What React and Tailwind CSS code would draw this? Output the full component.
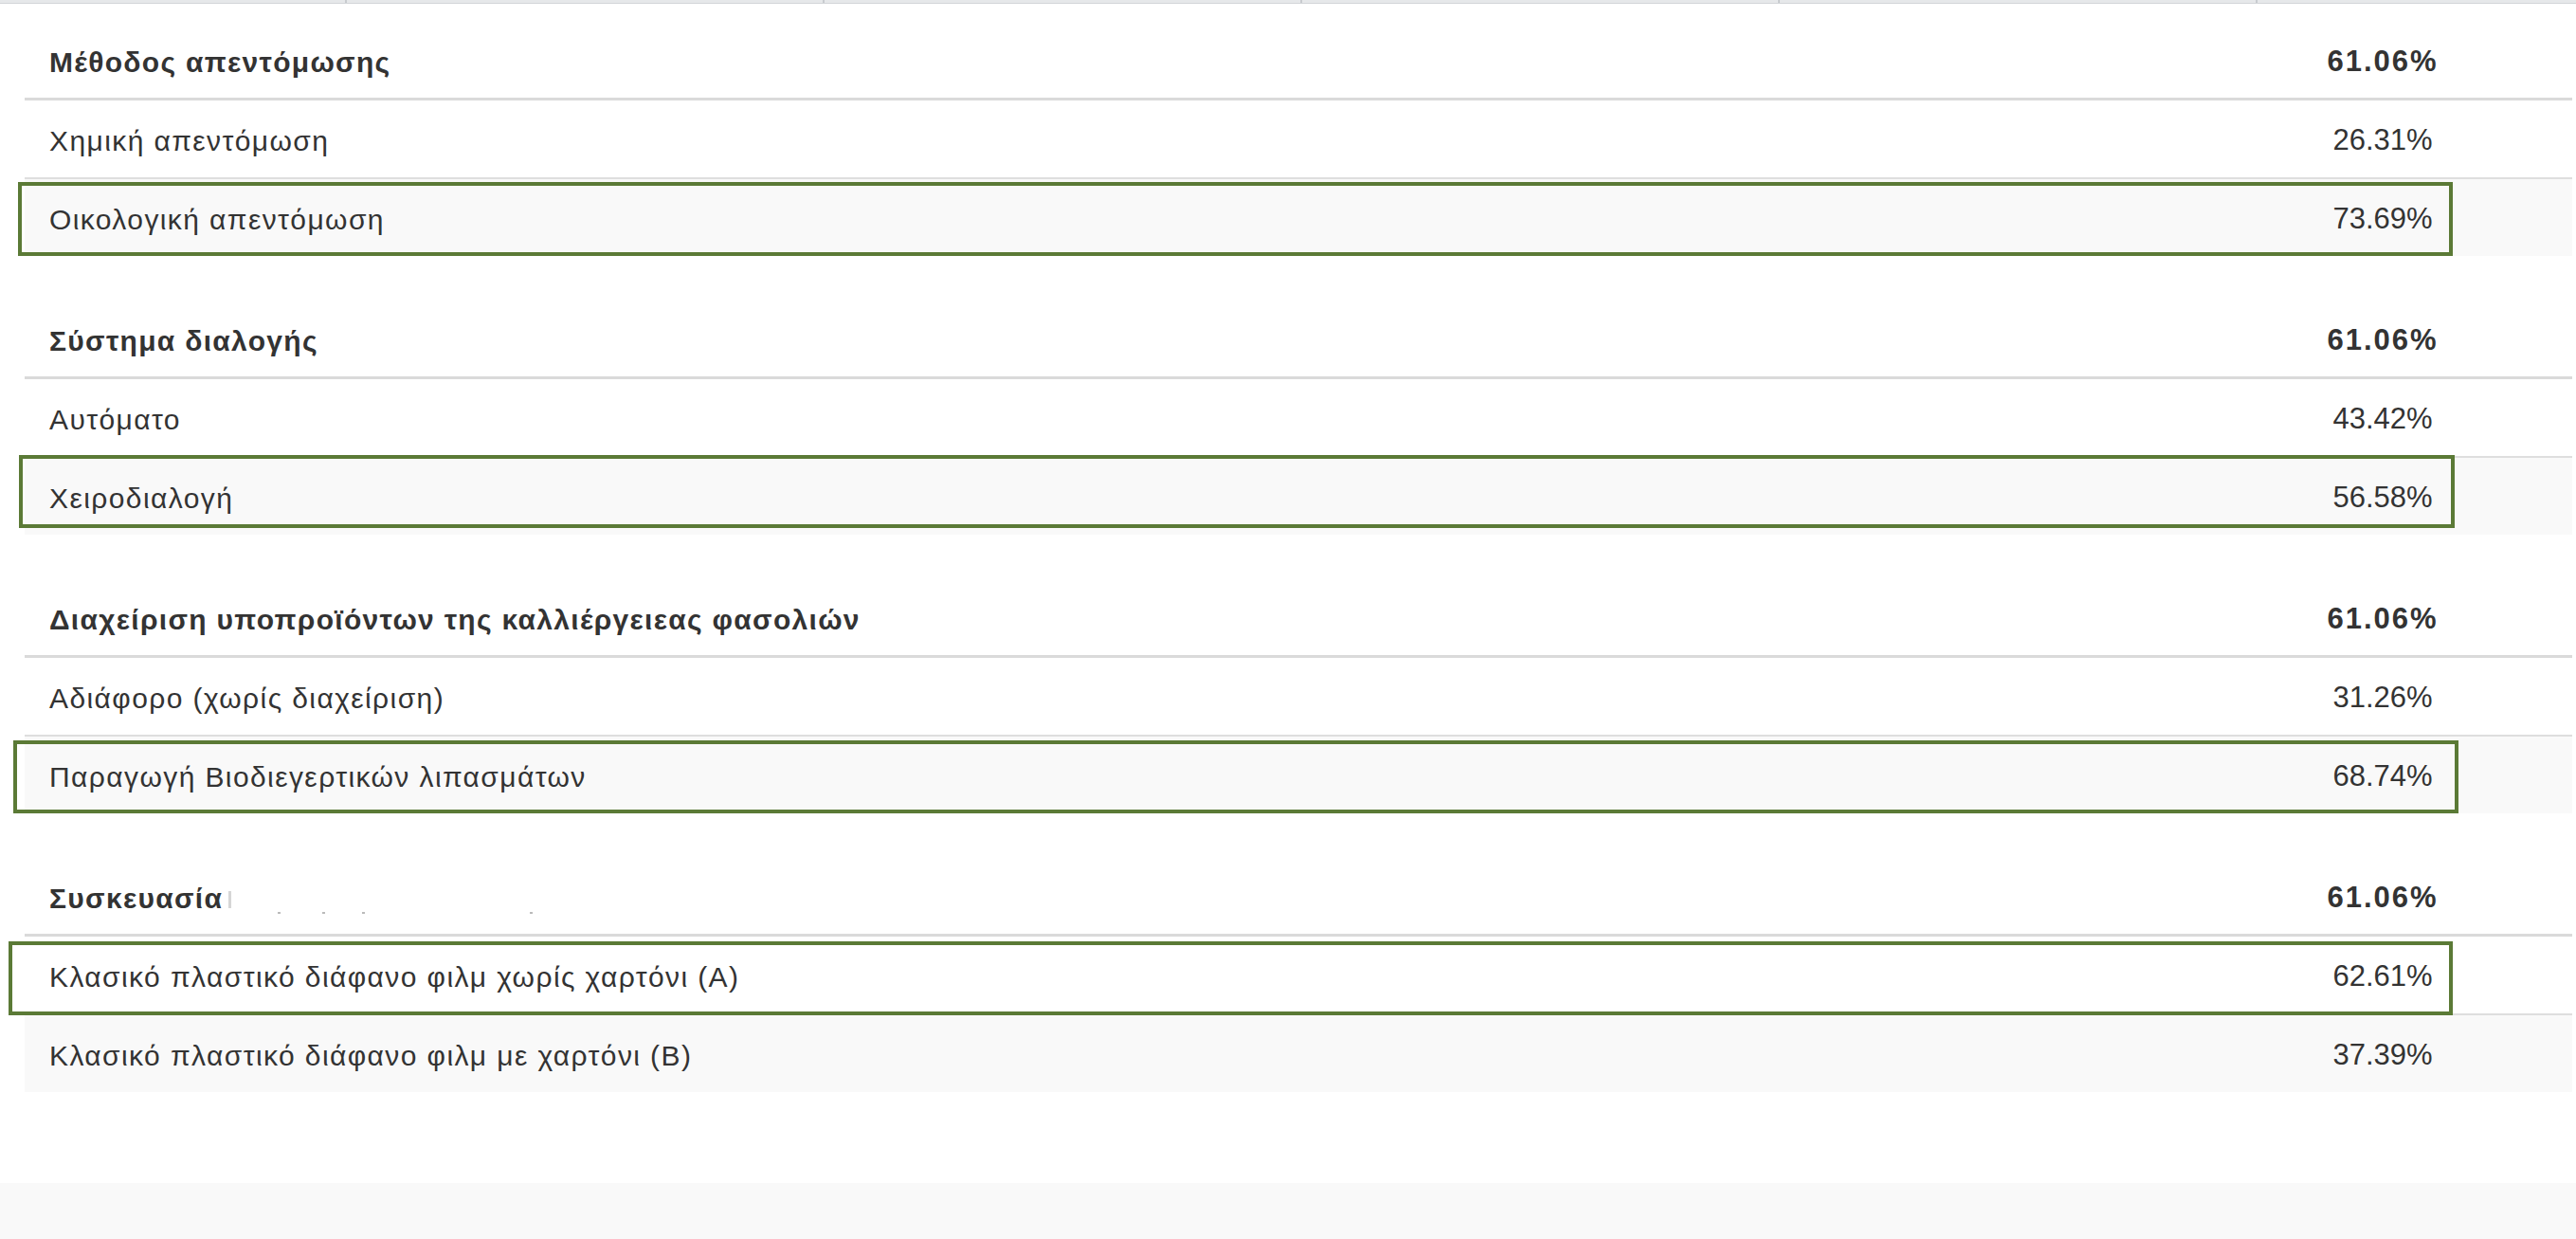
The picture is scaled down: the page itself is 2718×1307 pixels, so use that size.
const sections = [
  {
    title: "Μέθοδος απεντόμωσης",
    total: "61.06%",
    first: true,
    rows: [
      { label: "Χημική απεντόμωση", value: "26.31%" },
      {
        label: "Οικολογική απεντόμωση",
        value: "73.69%",
        box: "-left-[7px] top-[3px] w-[2569px] h-[78px]",
      },
    ],
  },
  {
    title: "Σύστημα διαλογής",
    total: "61.06%",
    rows: [
      { label: "Αυτόματο", value: "43.42%" },
      {
        label: "Χειροδιαλογή",
        value: "56.58%",
        box: "-left-[6px] -top-[3px] w-[2570px] h-[77px]",
      },
    ],
  },
  {
    title: "Διαχείριση υποπροϊόντων της καλλιέργειεας φασολιών",
    total: "61.06%",
    rows: [
      { label: "Αδιάφορο (χωρίς διαχείριση)", value: "31.26%" },
      {
        label: "Παραγωγή Βιοδιεγερτικών λιπασμάτων",
        value: "68.74%",
        box: "-left-[12px] top-[4px] w-[2580px] h-[77px]",
      },
    ],
  },
  {
    title: "Συσκευασία",
    total: "61.06%",
    redacted: true,
    rows: [
      {
        label: "Κλασικό πλαστικό διάφανο φιλμ χωρίς χαρτόνι (A)",
        value: "62.61%",
        box: "-left-[17px] top-[5px] w-[2579px] h-[78px]",
      },
      { label: "Κλασικό πλαστικό διάφανο φιλμ με χαρτόνι (B)", value: "37.39%" },
    ],
  },
];

function TopStrip() {
  return (
    <div className="flex h-[4px] bg-[#e6e8ea] border-b border-[#d2d5d8]">
      <div className="w-[366px] border-r-2 border-[#c8cbcf]" />
      <div className="w-[504px] border-r-2 border-[#c8cbcf]" />
      <div className="w-[504px] border-r-2 border-[#c8cbcf]" />
      <div className="w-[504px] border-r-2 border-[#c8cbcf]" />
      <div className="w-[504px] border-r-2 border-[#c8cbcf]" />
      <div className="flex-1" />
    </div>
  );
}

function Redacted() {
  // leftovers of a blanked out note after the heading
  return (
    <span className="relative inline-block w-[330px] h-[20px] ml-[6px]">
      <span className="absolute left-0 top-[2px] w-[3px] h-[18px] bg-[#d6d6d6]" />
      <span className="absolute left-[52px] bottom-[-6px] w-[3px] h-[2px] bg-[#bbbbbb]" />
      <span className="absolute left-[99px] bottom-[-6px] w-[3px] h-[2px] bg-[#bbbbbb]" />
      <span className="absolute left-[141px] bottom-[-6px] w-[3px] h-[2px] bg-[#bbbbbb]" />
      <span className="absolute left-[318px] bottom-[-6px] w-[3px] h-[2px] bg-[#bbbbbb]" />
    </span>
  );
}

function Row({ row, striped }) {
  return (
    <div
      className={
        "relative flex items-center h-[81px] pt-[3px] " +
        (striped ? "bg-[#f9f9f9]" : "bg-white")
      }
    >
      <div className="flex-1 pl-[26px] tracking-[1.4px]">{row.label}</div>
      <div className="w-[400px] text-center text-[31px]">{row.value}</div>
      {row.box && (
        <div
          className={
            "absolute border-[4px] border-[#5b7a36] pointer-events-none " +
            row.box
          }
        />
      )}
    </div>
  );
}

function Section({ section }) {
  return (
    <section className={section.first ? "mt-[18px]" : "mt-[46px]"}>
      <div className="flex items-center h-[84px] pt-[5px] border-b-[3px] border-[#dadada] font-bold">
        <div className="flex-1 pl-[26px] tracking-[1.3px]">
          {section.title}
          {section.redacted && <Redacted />}
        </div>
        <div className="w-[400px] text-center text-[31px] tracking-[2px]">
          {section.total}
        </div>
      </div>
      <Row row={section.rows[0]} />
      <div className="h-[2px] bg-[#dedede]" />
      <Row row={section.rows[1]} striped />
    </section>
  );
}

export default function App() {
  return (
    <div className="w-full bg-white text-[#333333] text-[30px] font-['Liberation_Sans',Arial,sans-serif]">
      <TopStrip />
      <div className="pl-[26px] pr-[4px]">
        {sections.map((s) => (
          <Section key={s.title} section={s} />
        ))}
      </div>
      <div className="h-[96px]" />
      <div className="h-[60px] bg-[#f9f9f9]" />
    </div>
  );
}
